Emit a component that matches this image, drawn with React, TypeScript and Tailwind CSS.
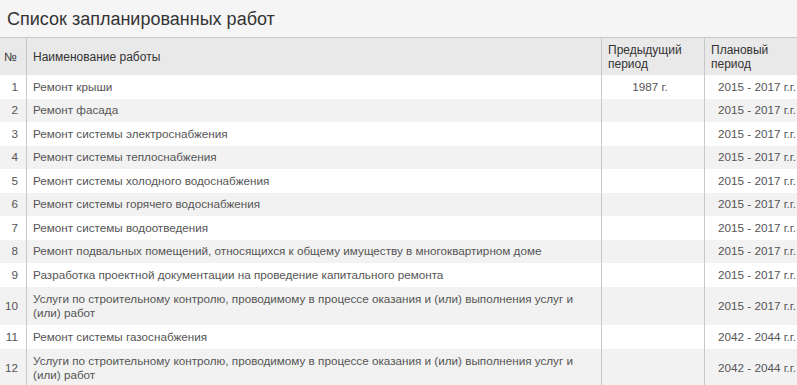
import React from "react";

type Row = { n: number; name: string; prev?: string; plan: string; two?: boolean };

const rows: Row[] = [
  { n: 1, name: "Ремонт крыши", prev: "1987 г.", plan: "2015 - 2017 г.г." },
  { n: 2, name: "Ремонт фасада", plan: "2015 - 2017 г.г." },
  { n: 3, name: "Ремонт системы электроснабжения", plan: "2015 - 2017 г.г." },
  { n: 4, name: "Ремонт системы теплоснабжения", plan: "2015 - 2017 г.г." },
  { n: 5, name: "Ремонт системы холодного водоснабжения", plan: "2015 - 2017 г.г." },
  { n: 6, name: "Ремонт системы горячего водоснабжения", plan: "2015 - 2017 г.г." },
  { n: 7, name: "Ремонт системы водоотведения", plan: "2015 - 2017 г.г." },
  { n: 8, name: "Ремонт подвальных помещений, относящихся к общему имуществу в многоквартирном доме", plan: "2015 - 2017 г.г." },
  { n: 9, name: "Разработка проектной документации на проведение капитального ремонта", plan: "2015 - 2017 г.г." },
  { n: 10, name: "Услуги по строительному контролю, проводимому в процессе оказания и (или) выполнения услуг и (или) работ", plan: "2015 - 2017 г.г.", two: true },
  { n: 11, name: "Ремонт системы газоснабжения", plan: "2042 - 2044 г.г." },
  { n: 12, name: "Услуги по строительному контролю, проводимому в процессе оказания и (или) выполнения услуг и (или) работ", plan: "2042 - 2044 г.г.", two: true },
];

export default function App() {
  return (
    <div
      className="w-[797px] h-[385px] overflow-hidden bg-white"
      style={{ fontFamily: '"Liberation Sans", Arial, sans-serif' }}
    >
      <div className="h-[37px] bg-[#f5f5f5] flex items-center pl-[7px] border-b border-[#c8c8c8] box-content">
        <span className="text-[18px] text-[#333] leading-none">Список запланированных работ</span>
      </div>
      <div className="w-[809px]">
        <div className="flex h-[37px] bg-[#e9e9e9] text-[12px] leading-[14px] text-[#333]">
          <div className="w-[27px] shrink-0 flex items-center pl-[4px] border-r border-[#c8c8c8]">№</div>
          <div className="w-[575px] shrink-0 flex items-center pl-[6px] border-r border-[#c8c8c8]">Наименование работы</div>
          <div className="w-[103px] shrink-0 flex items-center pl-[6px] border-r border-[#c8c8c8]">Предыдущий<br />период</div>
          <div className="w-[104px] shrink-0 flex items-center pl-[6px]">Плановый<br />период</div>
        </div>
        {rows.map((r, i) => (
          <div
            key={r.n}
            className={`flex text-[11.7px] leading-[14px] text-[#555] ${i % 2 === 0 ? "bg-white" : "bg-[#f2f2f2]"} ${r.two ? "h-[38.5px]" : "h-[23.5px]"}`}
          >
            <div className="w-[27px] shrink-0 flex items-center justify-end pr-[8px] border-r border-[#c8c8c8]">
              {r.n}
            </div>
            <div className="w-[575px] shrink-0 flex items-center pl-[6px] pr-[4px] border-r border-[#c8c8c8]">
              <span>{r.name}</span>
            </div>
            <div className="w-[103px] shrink-0 flex items-center justify-center pr-[6px] border-r border-[#c8c8c8]">
              {r.prev ?? ""}
            </div>
            <div className="w-[104px] shrink-0 flex items-center justify-center">{r.plan}</div>
          </div>
        ))}
      </div>
    </div>
  );
}
